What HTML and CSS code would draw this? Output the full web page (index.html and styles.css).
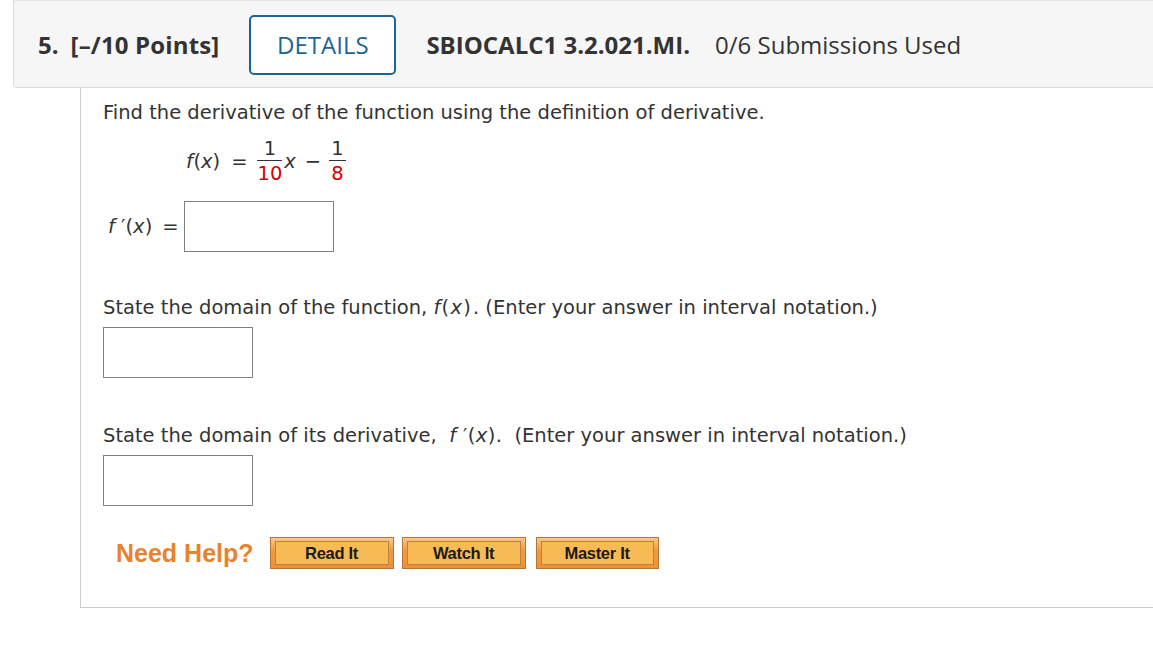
FILE: index.html
```html
<!DOCTYPE html>
<html>
<head>
<meta charset="utf-8">
<link rel="stylesheet" href="styles.css">
</head>
<body>
<div class="page">
  <div class="qhead">
    <span class="qnum">5.</span>
    <span class="qpts">[–/10 Points]</span>
    <span class="details">DETAILS</span>
    <span class="qid">SBIOCALC1 3.2.021.MI.</span>
    <span class="subs">0/6 Submissions Used</span>
  </div>
  <div class="qbody">
    <p class="prompt first">Find the derivative of the function using the definition of derivative.</p>
    <div class="eq">
      <span class="it">f</span>(<span class="it">x</span>)<span class="eqsign">=</span>
      <span class="frac"><span class="num">1</span><span class="den red">10</span></span><span class="it xv">x</span><span class="minus">−</span>
      <span class="frac"><span class="num">1</span><span class="den red">8</span></span>
    </div>
    <div class="ansrow">
      <span class="lbl"><span class="it">f</span> ′(<span class="it">x</span>)<span class="eqsign">=</span></span>
      <span class="box"></span>
    </div>
    <p class="prompt p2">State the domain of the function, <span class="math"><span class="it">f</span>(<span class="it">x</span>)</span>. (Enter your answer in interval notation.)</p>
    <span class="box"></span>
    <p class="prompt p3">State the domain of its derivative, &nbsp;<span class="math m2"><span class="it">f</span> ′(<span class="it">x</span>)</span>. &nbsp;(Enter your answer in interval notation.)</p>
    <span class="box"></span>
    <div class="help">
      <span class="needhelp">Need Help?</span>
      <span class="hbtn"><span class="hin">Read It</span></span>
      <span class="hbtn"><span class="hin">Watch It</span></span>
      <span class="hbtn"><span class="hin">Master It</span></span>
    </div>
  </div>
</div>
</body>
</html>
```
FILE: styles.css
```css
html, body { margin: 0; padding: 0; background: #fff; overflow: hidden; }
.page { width: 1170px; }
.qhead {
  margin-left: 13px;
  height: 88px;
  box-sizing: border-box;
  background: #f6f6f6;
  border: 1px solid #dcdcdc;
  border-top-color: #e6e6e6;
  border-radius: 0 0 0 4px;
  display: flex;
  align-items: center;
  padding-left: 24px;
  font-family: "Open Sans", "Noto Sans", sans-serif;
  font-size: 24px;
  color: #333;
}
.qnum { font-weight: 700; margin-right: 12px; }
.qpts { font-weight: 700; letter-spacing: 0.15px; }
.details {
  margin-left: 30px;
  width: 147px;
  height: 60px;
  box-sizing: border-box;
  border: 2px solid #1d6494;
  border-radius: 5px;
  display: flex;
  align-items: center;
  justify-content: center;
  color: #1d6494;
  font-size: 24px;
  background: #fff;
  margin-top: 1px;
}
.qid { font-weight: 700; margin-left: 30px; }
.subs { margin-left: 25px; }
.qbody {
  margin-left: 80px;
  border-left: 1px solid #cccccc;
  border-bottom: 1px solid #cccccc;
  height: 520px;
  padding-left: 22px;
  font-family: "DejaVu Sans", Verdana, sans-serif;
  font-size: 19.5px;
  color: #333;
  box-sizing: border-box;
}
.prompt { margin: 0; line-height: 24px; }
.first { padding-top: 13px; }
.it { font-style: italic; }
.math { letter-spacing: 1.2px; margin-right: 1px; }
.math.m2 { letter-spacing: 0.4px; margin-right: 0; }
.red { color: #d40000; }
.eq {
  margin-left: 83px;
  margin-top: 13px;
  display: flex;
  align-items: center;
  height: 46px;
}
.eq > .it:first-child { letter-spacing: 0.5px; }
.eqsign { margin: 0 9px 0 11px; }
.frac {
  display: inline-flex;
  flex-direction: column;
  align-items: center;
  padding: 0 1px;
}
.frac .num { border-bottom: 1px solid #333; padding: 0 2px 1px; line-height: 20px; text-align: center; align-self: stretch; }
.frac .den { line-height: 21px; padding-top: 2px; }
.xv { margin-left: 1px; margin-right: 1px; }
.minus { margin: 0 7px 0 8px; }
.ansrow {
  display: flex;
  align-items: center;
  margin-top: 17px;
}
.lbl { margin-left: 5px; width: 76px; }
.lbl .eqsign { margin: 0 0 0 10px; }
.box {
  display: block;
  width: 150px;
  height: 51px;
  box-sizing: border-box;
  border: 1px solid #808080;
  background: #fff;
}
.p2 { margin-top: 44px; margin-bottom: 7px; }
.p3 { margin-top: 46px; margin-bottom: 7px; }
.help {
  display: flex;
  align-items: center;
  margin-top: 31px;
  margin-left: 13px;
}
.needhelp {
  font-family: "Liberation Sans", Arial, sans-serif;
  font-weight: 700;
  font-size: 25px;
  color: #e8832c;
  margin-right: 16px;
}
.hbtn {
  display: flex;
  width: 124px;
  height: 32px;
  box-sizing: border-box;
  border: 1px solid #b4773a;
  background: linear-gradient(#fbc88a, #f29a40 40%, #ef9036);
  padding: 3px 4px;
  margin-right: 8px;
}
.hbtn:last-child { margin-left: 2px; width: 123px; }
.hin {
  flex: 1;
  border: 1px solid #b98245;
  background: #f8ba55;
  display: flex;
  align-items: center;
  justify-content: center;
  font-family: "Liberation Sans", Arial, sans-serif;
  font-weight: 700;
  font-size: 16.5px;
  color: #1a1a1a;
  letter-spacing: -0.3px;
}
```
